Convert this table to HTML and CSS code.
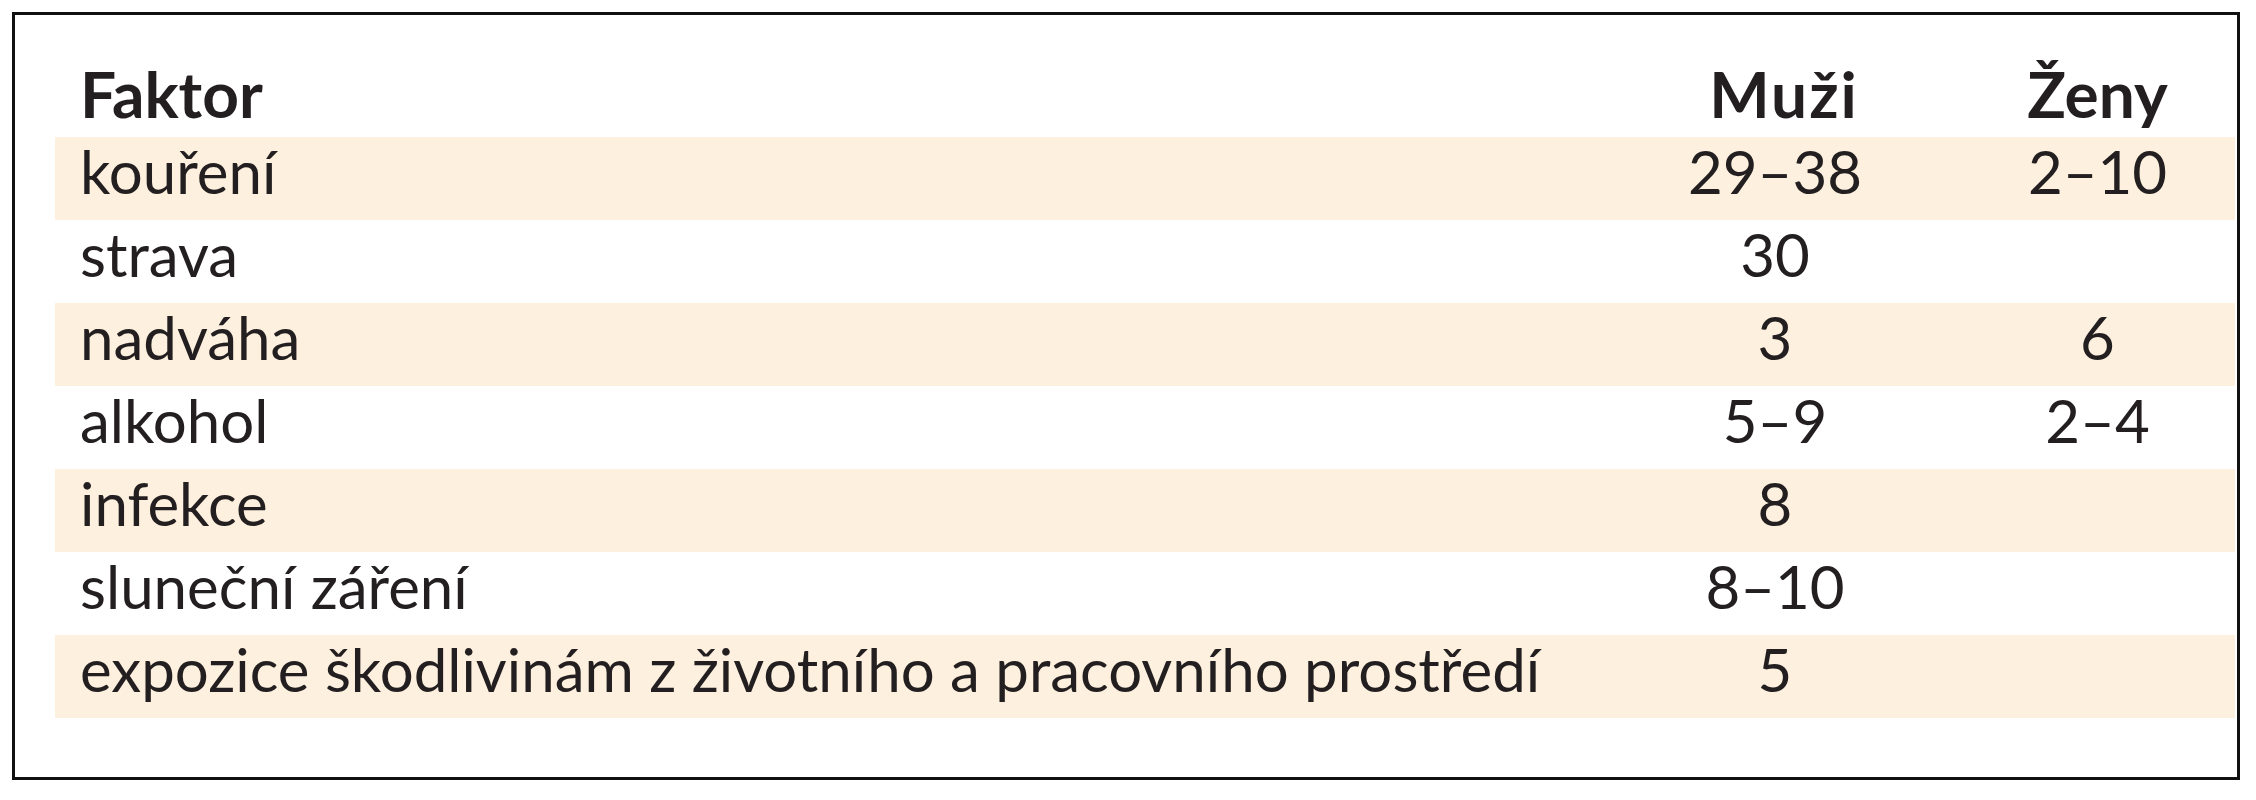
FILE: index.html
```html
<!DOCTYPE html>
<html lang="cs">
<head>
<meta charset="utf-8">
<title>Faktory</title>
<link rel="stylesheet" href="styles.css">
</head>
<body>
<div class="frame">
  <div class="table">
    <div class="row head">
      <div class="c1">Faktor</div>
      <div class="c2 muzi">Muži</div>
      <div class="c3">Ženy</div>
    </div>
    <div class="row odd">
      <div class="c1">kouření</div>
      <div class="c2">29–38</div>
      <div class="c3">2–10</div>
    </div>
    <div class="row">
      <div class="c1">strava</div>
      <div class="c2">30</div>
      <div class="c3"></div>
    </div>
    <div class="row odd">
      <div class="c1">nadváha</div>
      <div class="c2">3</div>
      <div class="c3">6</div>
    </div>
    <div class="row">
      <div class="c1">alkohol</div>
      <div class="c2">5–9</div>
      <div class="c3">2–4</div>
    </div>
    <div class="row odd">
      <div class="c1">infekce</div>
      <div class="c2">8</div>
      <div class="c3"></div>
    </div>
    <div class="row">
      <div class="c1">sluneční záření</div>
      <div class="c2">8–10</div>
      <div class="c3"></div>
    </div>
    <div class="row odd">
      <div class="c1">expozice škodlivinám z životního a pracovního prostředí</div>
      <div class="c2">5</div>
      <div class="c3"></div>
    </div>
  </div>
</div>
</body>
</html>
```
FILE: styles.css
```css
html, body {
  margin: 0;
  padding: 0;
  background: #ffffff;
}
body {
  font-family: Lato, "Open Sans", "DejaVu Sans", sans-serif;
  color: #231f20;
}
.frame {
  margin: 12px 0 0 12px;
  width: 2228px;
  height: 768px;
  box-sizing: border-box;
  border: 3px solid #111111;
  padding: 0 2px 0 40px;
}
.table {
  display: flex;
  flex-direction: column;
}
.row {
  display: grid;
  grid-template-columns: 1535px 370px 275px;
  height: 83px;
  align-items: start;
  font-size: 60px;
  line-height: 68px;
}
.row.head {
  height: 122px;
  align-items: end;
  font-weight: 700;
  font-size: 64px;
  line-height: 70px;
  padding-bottom: 8px;
  box-sizing: border-box;
}
.row.odd {
  background: #fdf0de;
}
.c1 {
  padding-left: 25px;
  white-space: nowrap;
}
.c2, .c3 {
  text-align: center;
}
.muzi {
  letter-spacing: 2px;
  padding-left: 18px;
}
```
